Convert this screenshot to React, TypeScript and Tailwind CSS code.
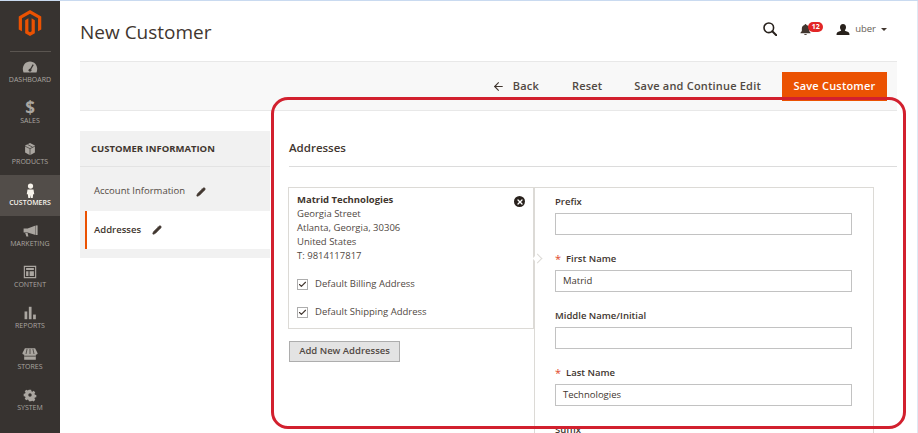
import React from "react";
import { ArrowLeft, Pencil, Check, X } from "lucide-react";

const ic = "w-[16px] h-[14px] fill-[#aaa6a0]";
const Dash = () => (<svg viewBox="0 0 20 16" className={ic}><path d="M10 1C4.500 1 1 5.500 1 10.500c0 1.600.4 3 .9 4.500h16.200c.5-1.500.9-2.900.9-4.500C19 5.500 15.500 1 10 1z" /><path d="M10 12l4-7" stroke="#373330" strokeWidth="1.600" /><circle cx="10" cy="12" r="1.800" fill="#373330" /></svg>);
const Box = () => (<svg viewBox="0 0 20 20" className={ic}><path d="M3 5l7-3.500L17 5v10l-7 4-7-4z" /><path d="M3 6l7 3.500L17 6M10 9.500V19M6.500 3.500l7 3.800" stroke="#373330" strokeWidth="1" fill="none" /></svg>);
const Person = () => (<svg viewBox="0 0 20 20" className="w-[15px] h-[15px] fill-[#f7f3eb]"><circle cx="10" cy="4" r="3.500" /><path d="M6 8.500h8l1 6.500h-1.500l-.5 5h-2.500l-.5-4-.5 4H7l-.5-5H5z" /></svg>);
const Bust = () => (<svg viewBox="0 0 14 11" className="w-[14px] h-[11px] fill-[#28211c]"><path d="M7 0c2 0 3 1.300 3 3.200 0 1.300-.6 2.300-1.200 3 .2.700 1 1 2.200 1.400 1.600.5 2.500 1 2.500 3.400H.5c0-2.400.9-2.900 2.500-3.400 1.200-.4 2-.7 2.200-1.400C4.600 5.500 4 4.500 4 3.200 4 1.300 5 0 7 0z" /></svg>);
const Bell = () => (<svg viewBox="0 0 12 12" className="w-[11px] h-[11px] fill-[#41362f]"><path d="M6 0c.6 0 1 .4 1 1 2 .5 3 2 3 4v2.500l1.500 2v.5H.5v-.5l1.500-2V5c0-2 1-3.500 3-4 0-.6.4-1 1-1z" /><path d="M4.500 11h3c0 .6-.7 1-1.500 1s-1.500-.4-1.500-1z" /></svg>);
const Mag = () => (<svg viewBox="0 0 14 14" className="w-[14px] h-[14px] fill-none stroke-[#28211c] stroke-[1.600]"><circle cx="5.800" cy="5.800" r="4.800" /><path d="M9.300 9.300l4 4" strokeLinecap="round" strokeWidth="2" /></svg>);
const Mega = () => (<svg viewBox="0 0 20 16" className={ic}><path d="M17 1v12L7 10H2V5h5z" /><path d="M4 10.500h3l1 4.500H5.500z" /><rect x="17.500" y="1" width="2" height="12" /></svg>);
const Content = () => (<svg viewBox="0 0 18 18" className={ic}><path fillRule="evenodd" d="M1 1h16v16H1zM2.500 2.500v13h13v-13zM4 4h10v2.500H4zM4 8h3v6H4zM8.500 8H14v6H8.500z" /></svg>);
const Bars = () => (<svg viewBox="0 0 20 18" className={ic}><rect x="3" y="7" width="3.500" height="10" /><rect x="8.500" y="1" width="3.500" height="16" /><rect x="14" y="11" width="3.500" height="6" /></svg>);
const Store = () => (<svg viewBox="0 0 22 18" className={ic}><path d="M4 1h14l3.500 7c0 1-1 2-2.500 2v7H3v-7C1.500 10 .5 9 .5 8z" /><path d="M7 2L5.500 9M11 2v7M15 2l1.500 7M3 12h16" stroke="#373330" strokeWidth="1" /></svg>);
const Gear = () => (<svg viewBox="0 0 20 20" className={ic}><path fillRule="evenodd" d="M8 1h4l.5 2.500 1.700.7L16.400 2.800l2.800 2.800-1.400 2.200.7 1.700 2.500.5v4l-2.500.5-.7 1.700 1.400 2.200-2.800 2.800-2.200-1.400-1.700.7L12 21H8l-.5-2.500-1.700-.7-2.200 1.400L.8 16.400l1.400-2.200-.7-1.700L-1 12V8l2.500-.5.7-1.700L.8 3.600 3.600.8l2.200 1.400 1.700-.7zM10 7a3 3 0 100 6 3 3 0 000-6z" transform="translate(1.800 1.800) scale(.82)" /></svg>);
const Dollar = () => <span className="text-[#aaa6a0] text-[17px] font-bold leading-[14px] h-[14px]">$</span>;

const items: [string, React.ReactNode, boolean][] = [
  ["Dashboard", <Dash />, false],
  ["Sales", <Dollar />, false],
  ["Products", <Box />, false],
  ["Customers", <Person />, true],
  ["Marketing", <Mega />, false],
  ["Content", <Content />, false],
  ["Reports", <Bars />, false],
  ["Stores", <Store />, false],
  ["System", <Gear />, false],
];

function Field({ label, value, req }: { label: string; value?: string; req?: boolean }) {
  return (
    <div className="flex flex-col mb-[14px]">
      <div className="h-[19px] text-[9.500px] font-semibold leading-[19px] text-[#41362f] flex items-center">
        {req && <span className="text-[#e0472a] text-[11px] mr-[5px] font-normal">*</span>}
        {label}
      </div>
      <div className="mt-[2px] w-[297px] h-[22px] border border-[#c2c2c2] bg-white px-[7px] text-[9.500px] leading-[20px] text-[#41362f]">{value}</div>
    </div>
  );
}

function Check1({ label }: { label: string }) {
  return (
    <div className="flex items-center gap-[7px] h-[28px]">
      <span className="w-[11px] h-[11px] border border-[#adadad] bg-white flex items-center justify-center">
        <Check size={9} strokeWidth={3} className="text-[#41362f]" />
      </span>
      <span className="text-[9.500px] text-[#514943]">{label}</span>
    </div>
  );
}

export default function App() {
  return (
    <div className="relative flex w-[918px] h-[433px] overflow-hidden bg-white border-t border-t-[#c9daf0] font-['Open_Sans',sans-serif]">
      <aside className="w-[60px] shrink-0 bg-[#373330] flex flex-col items-center">
        <svg viewBox="0 0 24 24" className="w-[26px] h-[28px] mt-[8px] fill-[#eb5202]">
          <path d="M12 24l-4.455-2.572v-12l2.970-1.715v12.001l1.485.902 1.485-.902V7.713l2.970 1.715v12L12 24zM22.391 6v12l-2.971 1.714V7.713L12 3.430 4.574 7.713v12L1.609 18V6L12 0l10.391 6z" />
        </svg>
        <div className="w-[41px] h-px bg-[#5a5550] mt-[14px]" />
        <nav className="w-full flex flex-col">
          {items.map(([l, icon, active]) => (
            <div key={l} className={`h-[41px] pt-[8px] flex flex-col items-center ${active ? "bg-[#524d49]" : ""}`}>
              <div className="h-[14px] flex items-center justify-center">{icon}</div>
              <span className={`text-[7px] leading-[11px] uppercase ${active ? "text-[#f7f3eb] font-semibold" : "text-[#aaa6a0]"}`}>{l}</span>
            </div>
          ))}
        </nav>
      </aside>

      <main className="flex-1 min-w-0 pl-[20px] pr-[21px] flex flex-col">
        <header className="h-[60px] flex items-start shrink-0">
          <h1 className="text-[19px] leading-[28px] mt-[17px] text-[#41362f] font-normal">New Customer</h1>
          <div className="ml-auto flex items-center h-[14px] mt-[21px] mr-[10px] text-[#41362f]">
            <Mag />
            <div className="relative ml-[23px] w-[11px] flex">
              <Bell />
              <span className="absolute -top-[2px] left-[8px] w-[15px] h-[10px] rounded-[5px] bg-[#e22626] text-white text-[7px] font-bold leading-[10px] text-center">12</span>
            </div>
            <div className="ml-[25px]"><Bust /></div>
            <span className="ml-[5px] text-[9.500px] text-[#676056]">uber</span>
            <span className="ml-[5px] w-0 h-0 border-x-[3px] border-x-transparent border-t-[3px] border-t-[#41362f]" />
          </div>
        </header>

        <div className="h-[50px] shrink-0 bg-[#f8f8f8] border-y border-[#e8e8e8] flex items-center justify-end pr-[10px] text-[11px] font-semibold text-[#514943] tracking-[.2px]">
          <ArrowLeft size={13} strokeWidth={2} className="mr-[8px] text-[#41362f]" />
          <span>Back</span>
          <span className="ml-[33px]">Reset</span>
          <span className="ml-[32px]">Save and Continue Edit</span>
          <button className="ml-[21px] w-[105px] h-[29px] bg-[#eb5202] text-white font-semibold text-[11px] tracking-[.2px]">Save Customer</button>
        </div>

        <div className="flex mt-[20px] min-h-0 flex-1">
          <div className="w-[190px] shrink-0 self-start bg-[#f1f1f1] pb-[9px]">
            <div className="h-[36px] pt-px border-b border-[#e3e3e3] pl-[11px] flex items-center text-[9.500px] font-bold text-[#41362f]">CUSTOMER INFORMATION</div>
            <div className="h-[44px] pt-[5px] pl-[14px] flex items-center text-[9.500px] text-[#514943]">
              Account Information
              <Pencil size={10} className="ml-[11px] fill-[#41362f] text-[#41362f]" />
            </div>
            <div className="ml-[5px] h-[38px] bg-white border-l-[2px] border-l-[#eb5202] pl-[7px] flex items-center text-[9.500px] font-semibold text-[#41362f]">
              Addresses
              <Pencil size={10} className="ml-[11px] fill-[#41362f] text-[#41362f]" />
            </div>
          </div>

          <section className="flex-1 min-w-0 ml-[19px]">
            <h2 className="h-[36px] border-b border-[#dcdcdc] text-[11.500px] font-semibold text-[#41362f] leading-[33px]">Addresses</h2>
            <div className="flex mt-[20px] -ml-px">
              <div className="w-[246px] shrink-0 self-start">
                <div className="h-[142px] border border-[#dcdad6] pl-[8px] pr-[7px] pt-[5px] relative text-[9.500px] leading-[14px] text-[#514943]">
                  <div className="font-bold text-[#41362f]">Matrid Technologies</div>
                  <div>Georgia Street</div>
                  <div>Atlanta, Georgia, 30306</div>
                  <div>United States</div>
                  <div>T: 9814117817</div>
                  <span className="absolute right-[8px] top-[8px] w-[11px] h-[11px] rounded-full bg-[#28211c] flex items-center justify-center">
                    <X size={8} strokeWidth={4} className="text-white" />
                  </span>
                  <div className="mt-[7px]">
                    <Check1 label="Default Billing Address" />
                    <Check1 label="Default Shipping Address" />
                  </div>
                </div>
                <button className="mt-[12px] ml-px w-[111px] h-[21px] bg-[#e3e3e3] border border-[#adadad] text-[9.500px] font-semibold text-[#514943]">Add New Addresses</button>
              </div>
              <div className="relative w-[340px] shrink-0 h-[400px] border-l border-t border-r border-[#dcdad6] pl-[20px] pt-[4px]">
                <span className="absolute -left-[1px] top-[67px] w-[7px] h-[7px] rotate-45 bg-white border-t border-r border-[#dcdad6]" />
                <Field label="Prefix" />
                <Field label="First Name" value="Matrid" req />
                <Field label="Middle Name/Initial" />
                <Field label="Last Name" value="Technologies" req />
                <Field label="Suffix" />
              </div>
            </div>
          </section>
        </div>
      </main>

      <div className="absolute left-[271px] top-[96px] w-[635px] h-[332px] rounded-[17px] border-[3px] border-[#d2202e] pointer-events-none" />
      <div className="absolute right-0 top-0 bottom-0 w-px bg-[#dfe8f4]" />
    </div>
  );
}
